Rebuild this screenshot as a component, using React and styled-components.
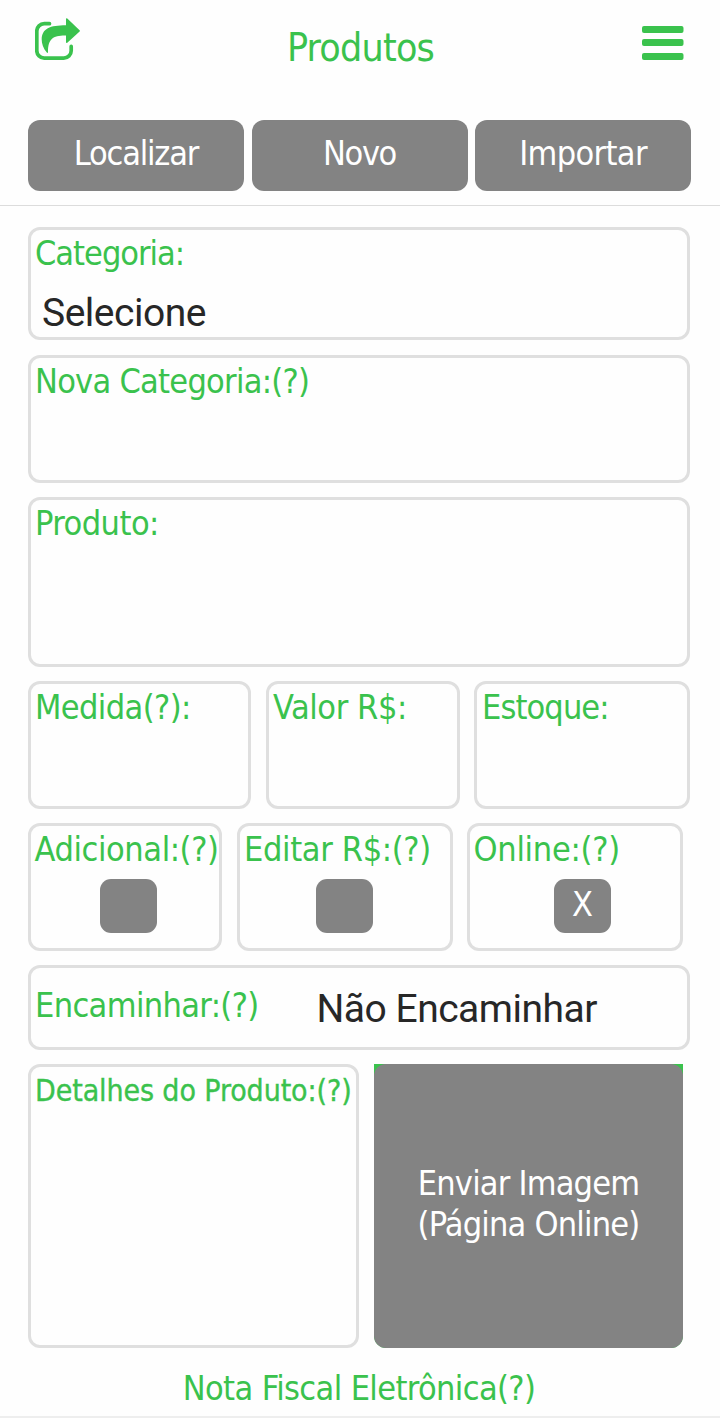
import React from 'react'
import styled, { createGlobalStyle } from 'styled-components'

const GREEN = '#3ac24d'
const GRAY = '#838383'

const GlobalStyle = createGlobalStyle`
  * {
    box-sizing: border-box;
  }
  body {
    margin: 0;
    background: #fefefe;
    font-family: 'DejaVu Sans Condensed', 'DejaVu Sans', sans-serif;
    font-size: 34px;
    line-height: 40px;
    color: ${GREEN};
  }
`

const Page = styled.div`
  width: 720px;
  height: 1418px;
  display: flex;
  flex-direction: column;
  overflow: hidden;
  border-bottom: 2px solid #eee;
`

const Header = styled.header`
  height: 120px;
  padding: 18px 36px 0 35px;
  display: flex;
  align-items: flex-start;
  justify-content: space-between;
`

const Title = styled.h1`
  margin: 7px 0 0 -2px;
  font-size: 39px;
  font-weight: normal;
  line-height: 46px;
  letter-spacing: -0.8px;
`

const MenuIcon = styled.svg`
  margin-top: 8px;
`

const Actions = styled.nav`
  height: 86px;
  padding-left: 28px;
  display: grid;
  grid-template-columns: 216px 216px 216px;
  column-gap: 7.5px;
  border-bottom: 1px solid #dcdcdc;
`

const ActionButton = styled.button`
  height: 71px;
  padding: 0 0 5px;
  border: 0;
  border-radius: 12px;
  background: ${GRAY};
  color: #fff;
  font: inherit;
  letter-spacing: ${p => p.$spacing}px;
`

const Form = styled.main`
  padding: 21px 30px 0 28px;
  display: flex;
  flex-direction: column;
`

const Row = styled.div`
  display: flex;
  gap: ${p => p.$gap || 0}px;
  height: ${p => p.$height}px;
  margin-bottom: ${p => p.$after || 14}px;
`

const Field = styled.section`
  width: ${p => p.$width}px;
  flex: none;
  margin-left: ${p => p.$shift || 0}px;
  padding-top: 3px;
  display: flex;
  flex-direction: column;
  border: 3px solid #dfdfdf;
  border-radius: 12px;
`

const InlineField = styled(Field)`
  flex-direction: row;
  padding-top: 17px;
`

const Label = styled.label`
  margin-left: ${p => p.$indent || 4}px;
  letter-spacing: ${p => p.$spacing}px;
  white-space: nowrap;
`

const SmallLabel = styled(Label)`
  font-size: 30px;
  line-height: 36px;
  padding-top: 3px;
  -webkit-text-stroke: 0.35px ${GREEN};
`

const Value = styled.span`
  margin: ${p => p.$margin};
  font-family: Roboto, sans-serif;
  font-size: 39px;
  line-height: 46px;
  letter-spacing: ${p => p.$spacing}px;
  color: #272727;
  white-space: nowrap;
`

const Check = styled.button`
  width: 57px;
  height: 54px;
  margin: 10px 0 0 ${p => p.$left}px;
  padding: 0 0 4px;
  border: 0;
  border-radius: 11px;
  background: ${GRAY};
  color: #fff;
  font: inherit;
`

const UploadFrame = styled.div`
  width: 309px;
  background: ${GREEN};
  border-radius: 0 0 12px 12px;
`

const UploadButton = styled.button`
  width: 100%;
  height: 100%;
  padding: 0 0 4px;
  display: flex;
  flex-direction: column;
  align-items: center;
  justify-content: center;
  border: 0;
  border-radius: 12px;
  background: ${GRAY};
  color: #fff;
  font: inherit;
  line-height: 41px;
  letter-spacing: -0.8px;
`

const Invoice = styled.a`
  margin: 6px 0 0 0;
  text-align: center;
  letter-spacing: -0.62px;
`

const ShareIcon = () => (
  <svg width="46" height="43" viewBox="0 0 46 43" fill="none">
    <path
      d="M14.5 5.7H9.2A7.4 7.4 0 0 0 1.8 13.1V32.7A7.4 7.4 0 0 0 9.2 40.1H28.8A7.4 7.4 0 0 0 36.2 32.7V28.4"
      stroke={GREEN}
      strokeWidth="3.7"
      strokeLinecap="round"
    />
    <path
      d="M31 1.2Q31 -0.2 32.3 0.6L44.6 12.2Q45.2 12.9 44.6 13.6L32.3 24.8Q31 25.4 31 24V17.6C18 17.4 13 21 13 34.2Q12.8 35.6 11.8 34.6C8 30 6.7 25.5 6.7 21.5C6.7 10.5 15 7.2 31 7.2Z"
      fill={GREEN}
    />
  </svg>
)

export default function App() {
  return (
    <>
      <GlobalStyle />
      <Page>
        <Header>
          <ShareIcon />
          <Title>Produtos</Title>
          <MenuIcon width="42" height="35" fill={GREEN}>
            <rect y="0" width="41.5" height="7" rx="2" />
            <rect y="13" width="41.5" height="7" rx="2" />
            <rect y="27" width="41.5" height="7" rx="2" />
          </MenuIcon>
        </Header>
        <Actions>
          <ActionButton $spacing={-1.2}>Localizar</ActionButton>
          <ActionButton $spacing={-1.4}>Novo</ActionButton>
          <ActionButton $spacing={-0.65}>Importar</ActionButton>
        </Actions>
        <Form>
          <Row $height={113} $after={15}>
            <Field $width={662}>
              <Label $spacing={-1}>Categoria:</Label>
              <Value $margin="17px 0 0 11px" $spacing={-0.5}>Selecione</Value>
            </Field>
          </Row>
          <Row $height={128}>
            <Field $width={662}>
              <Label $spacing={-0.74}>Nova Categoria:(?)</Label>
            </Field>
          </Row>
          <Row $height={170}>
            <Field $width={662}>
              <Label $spacing={-0.55}>Produto:</Label>
            </Field>
          </Row>
          <Row $height={128}>
            <Field $width={223}>
              <Label $spacing={-0.6}>Medida(?):</Label>
            </Field>
            <Field $width={194} $shift={15}>
              <Label $indent={4} $spacing={-0.4}>Valor R$:</Label>
            </Field>
            <Field $width={216} $shift={14}>
              <Label $indent={5} $spacing={-0.9}>Estoque:</Label>
            </Field>
          </Row>
          <Row $height={128}>
            <Field $width={194}>
              <Label $indent={3.5} $spacing={-0.41}>Adicional:(?)</Label>
              <Check $left={69} />
            </Field>
            <Field $width={216} $shift={15}>
              <Label $spacing={-0.35}>Editar R$:(?)</Label>
              <Check $left={76} />
            </Field>
            <Field $width={216} $shift={14}>
              <Label $indent={3.5} $spacing={-0.28}>Online:(?)</Label>
              <Check $left={84}>X</Check>
            </Field>
          </Row>
          <Row $height={85}>
            <InlineField $width={662}>
              <Label $spacing={-0.64}>Encaminhar:(?)</Label>
              <Value $margin="1px 0 0 58px" $spacing={-0.5}>Não Encaminhar</Value>
            </InlineField>
          </Row>
          <Row $height={284} $gap={15}>
            <Field $width={331}>
              <SmallLabel $spacing={-0.11}>Detalhes do Produto:(?)</SmallLabel>
            </Field>
            <UploadFrame>
              <UploadButton>
                <span>Enviar Imagem</span>
                <span>(Página Online)</span>
              </UploadButton>
            </UploadFrame>
          </Row>
          <Invoice>Nota Fiscal Eletrônica(?)</Invoice>
        </Form>
      </Page>
    </>
  )
}
